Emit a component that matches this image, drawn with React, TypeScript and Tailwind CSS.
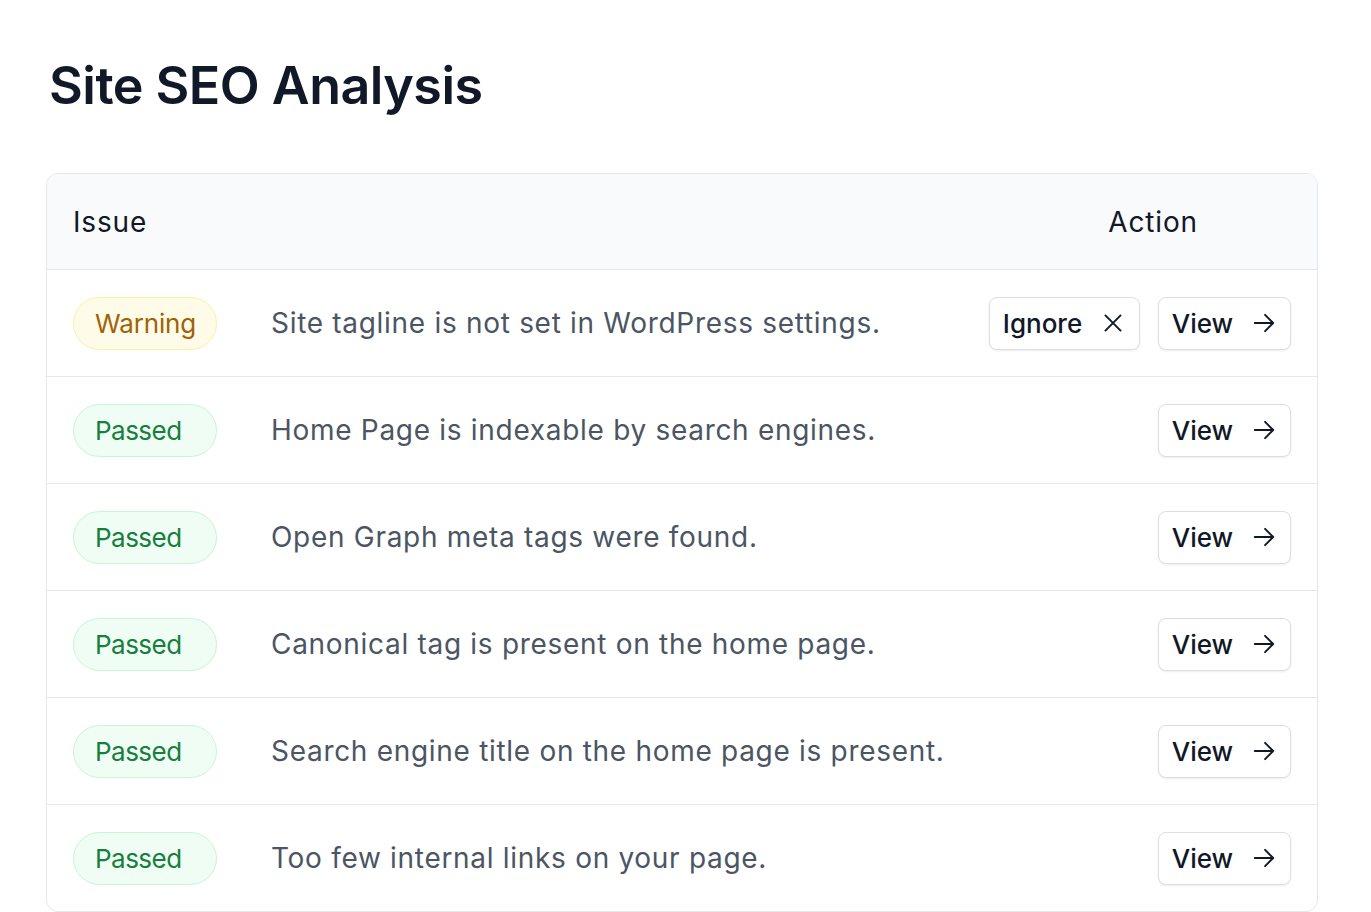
import React from 'react';

type Row = { status: 'Warning' | 'Passed'; text: string; ignorable?: boolean };

const ROWS: Row[] = [
  { status: 'Warning', text: 'Site tagline is not set in WordPress settings.', ignorable: true },
  { status: 'Passed', text: 'Home Page is indexable by search engines.' },
  { status: 'Passed', text: 'Open Graph meta tags were found.' },
  { status: 'Passed', text: 'Canonical tag is present on the home page.' },
  { status: 'Passed', text: 'Search engine title on the home page is present.' },
  { status: 'Passed', text: 'Too few internal links on your page.' },
];

const XIcon = () => (
  <svg width="26" height="26" viewBox="0 0 24 24" fill="none" stroke="currentColor" strokeWidth="1.8" strokeLinecap="round">
    <path d="M5 5l14 14M19 5L5 19" />
  </svg>
);

const ArrowIcon = () => (
  <svg width="26" height="26" viewBox="0 0 24 24" fill="none" stroke="currentColor" strokeWidth="1.8" strokeLinecap="round" strokeLinejoin="round">
    <path d="M3.5 12h17M13 4.5l7.5 7.5-7.5 7.5" />
  </svg>
);

const Badge: React.FC<{ status: Row['status'] }> = ({ status }) => (
  <span
    className={`inline-flex items-center w-[144px] h-[53px] rounded-full border pl-[21px] text-[26px] ${
      status === 'Warning'
        ? 'bg-[#fefce8] border-[#fdf0a0] text-[#a16207] tracking-[-0.005em]'
        : 'bg-[#f0fdf4] border-[#c6f6d5] text-[#15803d] tracking-[-0.02em]'
    }`}
  >
    {status}
  </span>
);

const ActionButton: React.FC<{ label: string; icon: React.ReactNode; width: string }> = ({ label, icon, width }) => (
  <button
    type="button"
    className={`${width} h-[53px] flex items-center justify-center gap-[18px] rounded-[8px] border border-[#dcdee3] bg-white shadow-[0_1px_2px_rgba(16,24,40,0.08)] text-[26px] font-medium text-[#111827]`}
  >
    {label}
    {icon}
  </button>
);

export default function App() {
  return (
    <div
      className="min-h-screen bg-white pl-[46px] pr-[53px] pt-[54px]"
      style={{ fontFamily: 'Inter, "Noto Sans", sans-serif' }}
    >
      <h1 className="pl-[3px] text-[52px] leading-[64px] font-semibold text-[#111827] tracking-[-0.01em]">
        Site SEO Analysis
      </h1>

      <div className="mt-[55px] rounded-[12px] border border-[#e5e7eb] overflow-hidden">
        {/* Header */}
        <div className="h-[95px] bg-[#f9fafb] flex items-center justify-between pl-[26px] pr-[119px] text-[28px] tracking-[0.03em] text-[#111827]">
          <span>Issue</span>
          <span>Action</span>
        </div>

        {ROWS.map((row, i) => (
          <div key={i} className="h-[107px] border-t border-[#e5e7eb] flex items-center pl-[26px] pr-[26px]">
            <Badge status={row.status} />
            <span className="ml-[54px] flex-1 text-[28px] tracking-[0.025em] text-[#4b5563]">{row.text}</span>
            <div className="flex items-center gap-[18px]">
              {row.ignorable && <ActionButton label="Ignore" icon={<XIcon />} width="w-[151px]" />}
              <ActionButton label="View" icon={<ArrowIcon />} width="w-[133px]" />
            </div>
          </div>
        ))}
      </div>
    </div>
  );
}
